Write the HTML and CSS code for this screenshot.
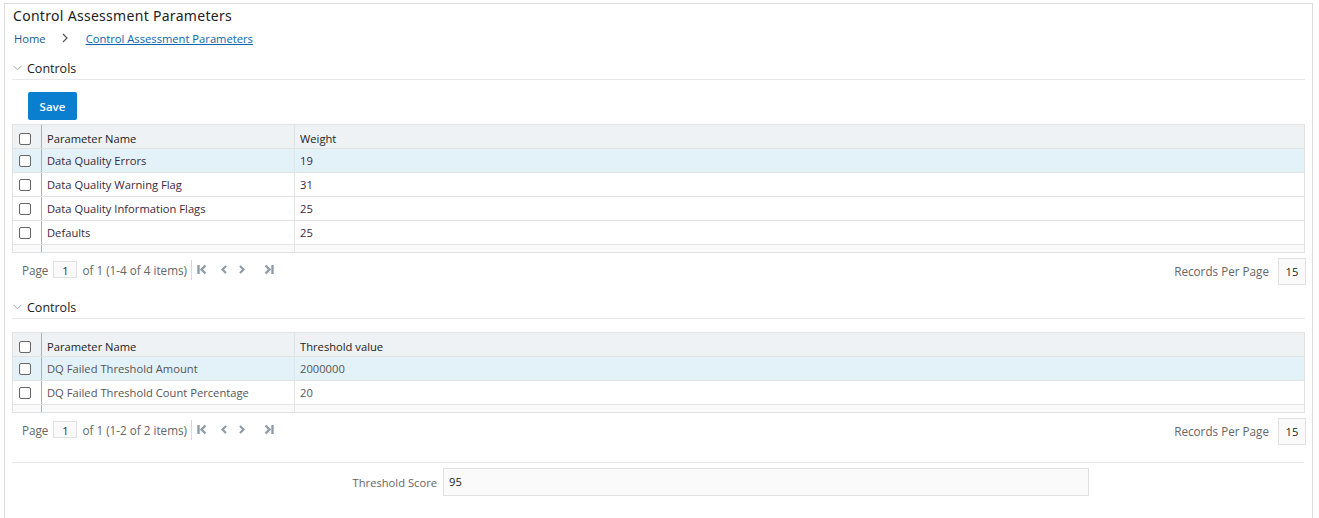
FILE: index.html
```html
<!DOCTYPE html>
<html>
<head>
<meta charset="utf-8">
<link rel="stylesheet" href="styles.css">
</head>
<body>
<div class="page">
  <h1 class="title">Control Assessment Parameters</h1>
  <nav class="crumbs">
    <span class="crumb-home">Home</span>
    <svg class="crumb-sep" width="8" height="10" viewBox="0 0 8 10"><path d="M2 1l4 4-4 4" fill="none" stroke="#555" stroke-width="1.2"/></svg>
    <a class="crumb-link" href="#">Control Assessment Parameters</a>
  </nav>

  <section class="section sec1">
    <div class="sec-head">
      <svg class="chev" width="9" height="6" viewBox="0 0 9 6"><path d="M0.5 0.8l4 4 4-4" fill="none" stroke="#9aa4ad" stroke-width="1"/></svg>
      <span>Controls</span>
    </div>
    <div class="toolbar"><button class="btn-save">Save</button></div>
    <div class="grid">
      <div class="row head"><div class="c-chk"><span class="cb"></span></div><div class="c-name">Parameter Name</div><div class="c-val">Weight</div></div>
      <div class="row sel"><div class="c-chk"><span class="cb"></span></div><div class="c-name">Data Quality Errors</div><div class="c-val">19</div></div>
      <div class="row"><div class="c-chk"><span class="cb"></span></div><div class="c-name">Data Quality Warning Flag</div><div class="c-val">31</div></div>
      <div class="row"><div class="c-chk"><span class="cb"></span></div><div class="c-name">Data Quality Information Flags</div><div class="c-val">25</div></div>
      <div class="row"><div class="c-chk"><span class="cb"></span></div><div class="c-name">Defaults</div><div class="c-val">25</div></div>
      <div class="row tail"><div class="c-chk"></div><div class="c-name"></div></div>
    </div>
    <div class="pager">
      <div class="pg-left">
        <span class="pg-text">Page</span>
        <span class="pg-box">1</span>
        <span class="pg-text">of 1 (1-4 of 4 items)</span>
        <span class="pg-div"></span>
        <svg class="pg-ico pg-first" width="10" height="11" viewBox="0 0 10 11"><path d="M1.5 1v9" stroke="#8f9ba6" stroke-width="2.4"/><path d="M8.5 1.5L4.5 5.5 8.5 9.5" fill="none" stroke="#8f9ba6" stroke-width="2.4"/></svg>
        <svg class="pg-ico pg-prev" width="10" height="11" viewBox="0 0 10 11"><path d="M7 2L3.5 5.5 7 9" fill="none" stroke="#8f9ba6" stroke-width="2.2"/></svg>
        <svg class="pg-ico pg-next" width="10" height="11" viewBox="0 0 10 11"><path d="M3 2L6.5 5.5 3 9" fill="none" stroke="#8f9ba6" stroke-width="2.2"/></svg>
        <svg class="pg-ico pg-last" width="10" height="11" viewBox="0 0 10 11"><path d="M1.5 1.5L5.5 5.5 1.5 9.5" fill="none" stroke="#8f9ba6" stroke-width="2.4"/><path d="M8.5 1v9" stroke="#8f9ba6" stroke-width="2.4"/></svg>
      </div>
      <div class="pg-right">
        <span class="pg-text">Records Per Page</span>
        <span class="rpp-box">15</span>
      </div>
    </div>
  </section>

  <section class="section sec2">
    <div class="sec-head">
      <svg class="chev" width="9" height="6" viewBox="0 0 9 6"><path d="M0.5 0.8l4 4 4-4" fill="none" stroke="#9aa4ad" stroke-width="1"/></svg>
      <span>Controls</span>
    </div>
    <div class="grid grid2">
      <div class="row head"><div class="c-chk"><span class="cb"></span></div><div class="c-name">Parameter Name</div><div class="c-val">Threshold value</div></div>
      <div class="row sel"><div class="c-chk"><span class="cb"></span></div><div class="c-name">DQ Failed Threshold Amount</div><div class="c-val">2000000</div></div>
      <div class="row"><div class="c-chk"><span class="cb"></span></div><div class="c-name">DQ Failed Threshold Count Percentage</div><div class="c-val">20</div></div>
      <div class="row tail"><div class="c-chk"></div><div class="c-name"></div></div>
    </div>
    <div class="pager">
      <div class="pg-left">
        <span class="pg-text">Page</span>
        <span class="pg-box">1</span>
        <span class="pg-text">of 1 (1-2 of 2 items)</span>
        <span class="pg-div"></span>
        <svg class="pg-ico pg-first" width="10" height="11" viewBox="0 0 10 11"><path d="M1.5 1v9" stroke="#8f9ba6" stroke-width="2.4"/><path d="M8.5 1.5L4.5 5.5 8.5 9.5" fill="none" stroke="#8f9ba6" stroke-width="2.4"/></svg>
        <svg class="pg-ico pg-prev" width="10" height="11" viewBox="0 0 10 11"><path d="M7 2L3.5 5.5 7 9" fill="none" stroke="#8f9ba6" stroke-width="2.2"/></svg>
        <svg class="pg-ico pg-next" width="10" height="11" viewBox="0 0 10 11"><path d="M3 2L6.5 5.5 3 9" fill="none" stroke="#8f9ba6" stroke-width="2.2"/></svg>
        <svg class="pg-ico pg-last" width="10" height="11" viewBox="0 0 10 11"><path d="M1.5 1.5L5.5 5.5 1.5 9.5" fill="none" stroke="#8f9ba6" stroke-width="2.4"/><path d="M8.5 1v9" stroke="#8f9ba6" stroke-width="2.4"/></svg>
      </div>
      <div class="pg-right">
        <span class="pg-text">Records Per Page</span>
        <span class="rpp-box">15</span>
      </div>
    </div>
  </section>

  <div class="score">
    <label class="score-label">Threshold Score</label>
    <div class="score-input">95</div>
  </div>
</div>
</body>
</html>
```

FILE: styles.css
```css
* { box-sizing: border-box; }
html, body { margin: 0; padding: 0; background: #fff; }
body {
  font-family: "Open Sans", "Noto Sans", sans-serif;
  font-size: 11.2px;
  color: #333;
}
.page {
  margin: 3px 0 0 4px;
  width: 1309px;
  height: 530px;
  border: 1px solid #dcdcdc;
  border-bottom: none;
  padding: 0 7px 0 7px;
}
.title {
  margin: 0;
  padding: 3px 0 0 1px;
  font-size: 14px;
  font-weight: normal;
  letter-spacing: 0.3px;
  color: #222;
  line-height: 18px;
  font-family: "Noto Sans", sans-serif;
}
.crumbs {
  display: flex;
  align-items: center;
  height: 22px;
  margin-top: 2px;
  padding-left: 2px;
}
.crumb-home { color: #1d5a8c; }
.crumb-sep { margin: 0 17px 0 15px; }
.crumb-link { color: #0b66b1; text-decoration: underline; }
.sec-head {
  display: flex;
  align-items: center;
  height: 23px;
  border-bottom: 1px solid #e6e8ea;
  font-size: 12.5px;
  color: #222;
  padding-left: 1px;
}
.sec1 .sec-head { margin-top: 8px; }
.chev { margin-right: 5px; }
.toolbar { padding: 12px 0 4px 16px; }
.btn-save {
  display: block;
  width: 49px;
  height: 28px;
  border: none;
  border-radius: 2px;
  background: #0b7fcf;
  color: #fff;
  font-family: "Open Sans", sans-serif;
  font-size: 11.5px;
  font-weight: 600;
  padding: 0;
}
.grid {
  border: 1px solid #e1e3e5;
  width: 1293px;
}
.row {
  display: flex;
  height: 24px;
  border-bottom: 1px solid #e1e3e5;
  background: #fff;
}
.row.head { background: #eef2f5; height: 24px; }
.row.head .c-name, .row.head .c-val { padding-top: 5px; line-height: 18px; }
.row.head .c-chk { align-items: flex-start; padding-top: 8px; }
.row.sel { background: #e3f1f9; }
.row.tail { height: 7px; border-bottom: none; background: #fafafa; }
.c-chk {
  width: 29px;
  display: flex;
  align-items: center;
  justify-content: flex-start;
  padding-left: 6px;
  border-right: 1px solid #a9b0b6;
  flex: none;
}
.c-name {
  width: 253px;
  flex: none;
  border-right: 1px solid #e1e3e5;
  padding-left: 5px;
  line-height: 23px;
  color: #3b2840;
}
.c-val {
  flex: 1;
  padding-left: 5px;
  line-height: 23px;
  color: #3b2840;
}
.head .c-name, .head .c-val { color: #222; }
.grid2 .c-name, .grid2 .c-val { color: #555; }
.grid2 .head .c-name, .grid2 .head .c-val { color: #222; }
.cb {
  width: 12px;
  height: 12px;
  border: 1px solid #666;
  border-radius: 2px;
  background: #fff;
}
.pager {
  display: flex;
  justify-content: space-between;
  align-items: center;
  height: 36px;
  padding: 0 0 0 10px;
  width: 1294px;
}
.pg-left { display: flex; align-items: center; margin-top: -3px; }
.pg-text { color: #666; font-size: 11.7px; }
.pg-box {
  display: inline-block;
  width: 24px;
  height: 17px;
  border: 1px solid #dfe1e3;
  background: #fafafa;
  text-align: center;
  line-height: 17px;
  margin: 0 5px 0 5px;
  color: #333;
}
.pg-div {
  width: 1px;
  height: 20px;
  background: #d6d8da;
  margin: 0 5px 0 4px;
}
.pg-first { margin-right: 12px; }
.pg-prev { margin-right: 8px; }
.pg-next { margin-right: 17px; }
.pg-right { display: flex; align-items: center; }
.rpp-box {
  display: inline-block;
  width: 28px;
  height: 27px;
  border: 1px solid #dfe1e3;
  background: #fafafa;
  line-height: 25px;
  text-align: center;
  margin-left: 9px;
  color: #222;
}
.sec2 { margin-top: 5px; }
.sec2 .sec-head { margin-top: 7px; margin-bottom: 13px; }
.score {
  margin-top: 13px;
  border-top: 1px solid #e6e8ea;
  width: 1292px;
  display: flex;
  align-items: center;
  padding-top: 5px;
}
.score-label {
  width: 431px;
  text-align: right;
  color: #666;
  padding-right: 6px;
}
.score-input {
  width: 646px;
  height: 28px;
  border: 1px solid #dfe1e3;
  background: #fafafa;
  line-height: 26px;
  padding-left: 5px;
  color: #222;
}
```
